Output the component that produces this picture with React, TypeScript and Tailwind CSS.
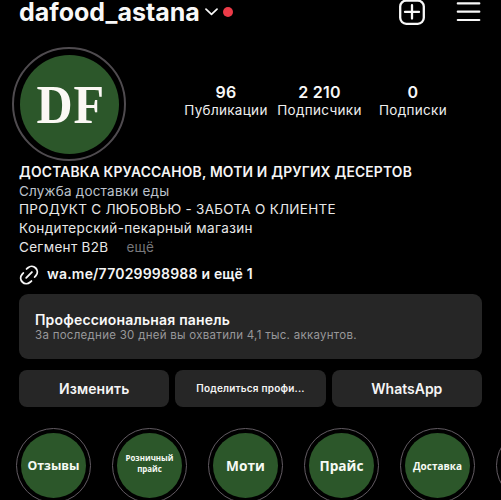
interface Stat {
  readonly value: string;
  readonly label: string;
  readonly width: string;
}

const STATS: readonly Stat[] = [
  { value: '96', label: 'Публикации', width: 'w-[93px]' },
  { value: '2 210', label: 'Подписчики', width: 'w-[94px]' },
  { value: '0', label: 'Подписки', width: 'w-[93px]' },
];

interface Highlight {
  readonly label: string;
  readonly text: string;
}

const HIGHLIGHTS: readonly Highlight[] = [
  { label: 'Отзывы', text: 'pt-[1px] text-[12.3px]' },
  { label: 'Розничный прайс', text: 'text-[7.9px] leading-[11px] pb-[3px]' },
  { label: 'Моти', text: 'pt-[1px] text-[13.7px]' },
  { label: 'Прайс', text: 'pt-[1px] text-[13.7px]' },
  { label: 'Доставка', text: 'pt-[1px] text-[10px]' },
  { label: '', text: 'text-[10px]' },
];

const Header = () => (
  <header className="flex h-[26px] items-center pl-[19px] pr-[20px]">
    <h1 className="-mt-[2px] text-[25px] font-bold leading-[26px]">dafood_astana</h1>
    <svg className="-mt-[2px] ml-[5px] h-[8px] w-[13px] shrink-0" viewBox="0 0 13 8" fill="none" stroke="currentColor" strokeWidth="1.7">
      <path d="M1 1.2 6.5 6.4 12 1.2" strokeLinecap="round" strokeLinejoin="round" />
    </svg>
    <span className="-mt-[2px] ml-[5px] size-[10px] shrink-0 rounded-full bg-[#ec3b48]" />
    <svg className="ml-auto h-[26px] w-[26px]" viewBox="0 0 26 26" fill="none" stroke="currentColor" strokeWidth="2.3" strokeLinecap="round">
      <rect x="1.2" y="0.6" width="23.6" height="23.2" rx="6" />
      <path d="M13 5.2v13.4M6 11.9h14" />
    </svg>
    <svg className="ml-[31px] h-[26px] w-[25px]" viewBox="0 0 25 26" stroke="currentColor" strokeWidth="2.2" strokeLinecap="round">
      <path d="M1.8 3.4h21.5M1.8 11.7h21.5M1.8 20h21.5" />
    </svg>
  </header>
);

const Avatar = () => (
  <div className="flex size-[114px] shrink-0 items-center justify-center rounded-full border-2 border-[#4f4b4f]">
    <div className="flex size-[99px] items-center justify-center rounded-full bg-[#2c572a] font-['Liberation_Serif',serif] text-[55px] font-bold leading-none text-[#fbf8f4]">
      <span className="ml-[4px] scale-x-[0.91] tracking-[1px]">DF</span>
    </div>
  </div>
);

const LinkIcon = () => (
  <svg className="mr-[8px] size-[20px]" viewBox="0 0 20 20" fill="none" stroke="currentColor" strokeWidth="1.9" strokeLinecap="round">
    <path d="M7.6 3.9 9 2.7a5.6 5.6 0 0 1 7.9 7.9L15.7 12" />
    <path d="M12.4 16.1 11 17.3a5.6 5.6 0 0 1-7.9-7.9L4.3 8" />
    <path d="M7.2 12.8l5.7-5.7" />
  </svg>
);

const Bio = () => (
  <section className="mt-[2px] pl-[19px] text-[13.5px] leading-[18.7px] tracking-[0.25px] text-[#e8e8e8]">
    <p className="text-[13.8px] font-semibold tracking-[0.2px] text-[#f5f5f5]">ДОСТАВКА КРУАССАНОВ, МОТИ И ДРУГИХ ДЕСЕРТОВ</p>
    <p className="tracking-[0.2px] text-[#bcc2cc]">Служба доставки еды</p>
    <p className="tracking-[0.27px]">ПРОДУКТ С ЛЮБОВЬЮ - ЗАБОТА О КЛИЕНТЕ</p>
    <p className="tracking-[0.37px]">Кондитерский-пекарный магазин</p>
    <p className="tracking-[0.3px]">
      Сегмент B2B<span className="ml-[18px] text-[#77777a]">ещё</span>
    </p>
    <p className="mt-[8px] flex items-center text-[14px] font-semibold tracking-[0.2px] text-[#f5f5f5]">
      <LinkIcon />
      <span>wa.me/77029998988 и ещё 1</span>
    </p>
  </section>
);

const ActionButton = ({ label, text }: { label: string; text: string }) => (
  <button className={`h-[37px] flex-1 rounded-[8px] bg-[#262626] font-semibold text-[#f5f5f5] ${text}`}>{label}</button>
);

const HighlightCircle = ({ label, text }: Highlight) => (
  <div className="flex size-[75px] shrink-0 items-center justify-center rounded-full border border-[#625b62]">
    <div
      className={`flex size-[65px] items-center justify-center rounded-full bg-[#2c572a] text-center font-['Open_Sans',sans-serif] font-bold text-[#f6faf4] ${text}`}
    >
      {label}
    </div>
  </div>
);

export default function App() {
  return (
    <main className="h-[500px] w-[501px] overflow-hidden bg-black font-['Inter',sans-serif] text-[#f8f8f8]">
      <Header />
      <div className="mt-[21px] flex items-center pl-[12px]">
        <Avatar />
        <dl className="ml-[53.5px] mt-[-6px] flex text-center">
          {STATS.map(({ value, label, width }) => (
            <div key={label} className={`flex flex-col items-center ${width}`}>
              <dd className="text-[16px] font-semibold leading-[19px] tracking-[0.2px]">{value}</dd>
              <dt className="order-last -mt-px text-[13.5px] leading-[18px] tracking-[0.3px] text-[#eeeeee]">{label}</dt>
            </div>
          ))}
        </dl>
      </div>
      <Bio />
      <section className="mx-[19px] mt-[9px] flex h-[65.5px] flex-col justify-center rounded-[9px] bg-[#262626] pl-[16px]">
        <h2 className="text-[14px] font-semibold leading-[17px] tracking-[0.18px]">Профессиональная панель</h2>
        <p className="text-[11.5px] leading-[14px] tracking-[0.28px] text-[#98989a]">
          За последние 30 дней вы охватили 4,1 тыс. аккаунтов.
        </p>
      </section>
      <div className="mx-[19px] mt-[11px] flex gap-[6px]">
        <ActionButton label="Изменить" text="text-[14px] tracking-[0.1px]" />
        <ActionButton label="Поделиться профи..." text="text-[10px] tracking-[0.2px]" />
        <ActionButton label="WhatsApp" text="text-[14px]" />
      </div>
      <div className="mt-[21px] flex gap-[21px] pl-[16px]">
        {HIGHLIGHTS.map((item) => (
          <HighlightCircle key={item.label} {...item} />
        ))}
      </div>
    </main>
  );
}
